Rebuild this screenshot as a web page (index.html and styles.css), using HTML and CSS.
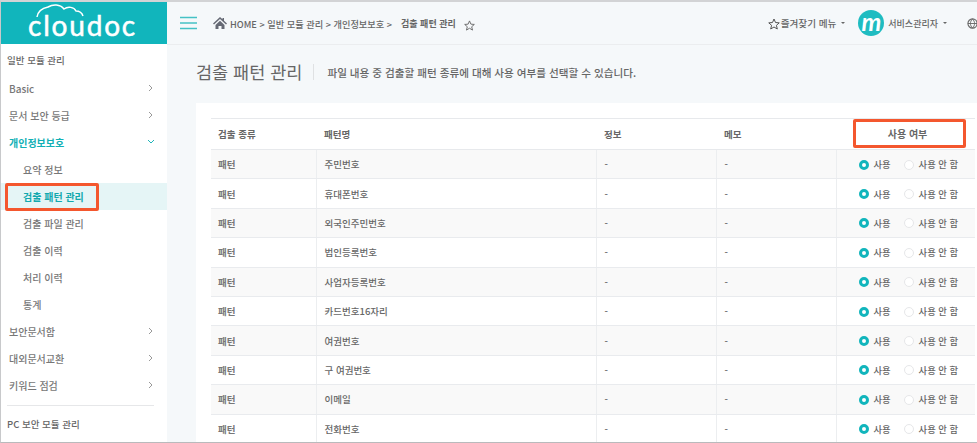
FILE: index.html
```html
<!DOCTYPE html>
<html lang="ko">
<head>
<meta charset="utf-8">
<title>검출 패턴 관리</title>
<link rel="stylesheet" href="styles.css">
</head>
<body>
<div class="app">
  <aside class="side">
    <div class="logo">
      <svg class="cloud" width="50" height="14" viewBox="0 0 50 14"><path d="M2 13C3 7 8 4 13 3C18 0 25 0 29 5C33 2 39 3 41 7C44 7 47 9 48 12" fill="none" stroke="#fff" stroke-width="1.5"/></svg>
      <span class="logo-text">cloudoc</span>
    </div>
    <nav class="menu">
      <div class="sect">일반 모듈 관리</div>
      <div class="item">Basic<svg class="chev" width="6" height="8" viewBox="0 0 6 8"><path d="M1 1l3 3-3 3" fill="none" stroke="#999" stroke-width="1"/></svg></div>
      <div class="item">문서 보안 등급<svg class="chev" width="6" height="8" viewBox="0 0 6 8"><path d="M1 1l3 3-3 3" fill="none" stroke="#999" stroke-width="1"/></svg></div>
      <div class="item open">개인정보보호<svg class="chev" width="8" height="6" viewBox="0 0 8 6"><path d="M1 1l3 3 3-3" fill="none" stroke="#1fb5ba" stroke-width="1"/></svg></div>
      <div class="sub">요약 정보</div>
      <div class="sub current">검출 패턴 관리<span class="redbox side-box"></span></div>
      <div class="sub">검출 파일 관리</div>
      <div class="sub">검출 이력</div>
      <div class="sub">처리 이력</div>
      <div class="sub">통계</div>
      <div class="item">보안문서함<svg class="chev" width="6" height="8" viewBox="0 0 6 8"><path d="M1 1l3 3-3 3" fill="none" stroke="#999" stroke-width="1"/></svg></div>
      <div class="item">대외문서교환<svg class="chev" width="6" height="8" viewBox="0 0 6 8"><path d="M1 1l3 3-3 3" fill="none" stroke="#999" stroke-width="1"/></svg></div>
      <div class="item">키워드 점검<svg class="chev" width="6" height="8" viewBox="0 0 6 8"><path d="M1 1l3 3-3 3" fill="none" stroke="#999" stroke-width="1"/></svg></div>
      <div class="rule"></div>
      <div class="sect last">PC 보안 모듈 관리</div>
    </nav>
  </aside>
  <main class="main">
    <header class="top">
      <svg class="burger" width="17" height="14" viewBox="0 0 17 14"><path d="M0 1.5h17M0 7h17M0 12.500h17" stroke="#45c1c5" stroke-width="1.500"/></svg>
      <svg class="home" width="14" height="12" viewBox="0 0 14 12"><path d="M7 0L0 6.500l1 1L7 2l6 5.500 1-1L11 3.700V1H9.500v1.300zM2.500 8L7 3.800 11.500 8v4H8.500V9h-3v3h-3z" fill="#666a75"/></svg>
      <div class="crumbs"><span>HOME &gt; 일반 모듈 관리 &gt; 개인정보보호 &gt;</span><b>검출 패턴 관리</b></div>
      <svg class="star" width="11" height="11" viewBox="0 0 24 24"><path d="M12 2l3 7 7.500.7-5.700 5 1.800 7.300L12 18l-6.600 4 1.800-7.300-5.700-5L9 9z" fill="none" stroke="#666" stroke-width="2"/></svg>
      <div class="tools">
        <svg class="star2" width="12" height="12" viewBox="0 0 24 24"><path d="M12 2l3 7 7.500.7-5.700 5 1.800 7.300L12 18l-6.600 4 1.800-7.300-5.700-5L9 9z" fill="none" stroke="#555" stroke-width="2"/></svg>
        <span class="fav">즐겨찾기 메뉴</span><i class="caret"></i>
        <span class="avatar">m</span>
        <span class="user">서비스관리자</span><i class="caret"></i>
        <svg class="globe" width="11" height="11" viewBox="0 0 12 12"><circle cx="6" cy="6" r="5" fill="none" stroke="#666" stroke-width="1.200"/><path d="M1 6h10M6 1c-3 3-3 7 0 10M6 1c3 3 3 7 0 10" fill="none" stroke="#666"/></svg>
      </div>
    </header>
    <div class="title-row">
      <h1>검출 패턴 관리</h1>
      <p>파일 내용 중 검출할 패턴 종류에 대해 사용 여부를 선택할 수 있습니다.</p>
    </div>
    <section class="card">
      <table class="grid">
        <colgroup><col class="c1"><col class="c2"><col class="c3"><col class="c4"><col class="c5"></colgroup>
        <thead>
          <tr><th>검출 종류</th><th>패턴명</th><th>정보</th><th>메모</th><th class="use">사용 여부<span class="redbox head-box"></span></th></tr>
        </thead>
        <tbody>
          <tr><td class="k">패턴</td><td>주민번호</td><td>-</td><td>-</td><td class="opt"><i class="on"></i><span class="l1">사용</span><i class="off"></i><span>사용 안 함</span></td></tr>
          <tr><td class="k">패턴</td><td>휴대폰번호</td><td>-</td><td>-</td><td class="opt"><i class="on"></i><span class="l1">사용</span><i class="off"></i><span>사용 안 함</span></td></tr>
          <tr><td class="k">패턴</td><td>외국인주민번호</td><td>-</td><td>-</td><td class="opt"><i class="on"></i><span class="l1">사용</span><i class="off"></i><span>사용 안 함</span></td></tr>
          <tr><td class="k">패턴</td><td>법인등록번호</td><td>-</td><td>-</td><td class="opt"><i class="on"></i><span class="l1">사용</span><i class="off"></i><span>사용 안 함</span></td></tr>
          <tr><td class="k">패턴</td><td>사업자등록번호</td><td>-</td><td>-</td><td class="opt"><i class="on"></i><span class="l1">사용</span><i class="off"></i><span>사용 안 함</span></td></tr>
          <tr><td class="k">패턴</td><td>카드번호16자리</td><td>-</td><td>-</td><td class="opt"><i class="on"></i><span class="l1">사용</span><i class="off"></i><span>사용 안 함</span></td></tr>
          <tr><td class="k">패턴</td><td>여권번호</td><td>-</td><td>-</td><td class="opt"><i class="on"></i><span class="l1">사용</span><i class="off"></i><span>사용 안 함</span></td></tr>
          <tr><td class="k">패턴</td><td>구 여권번호</td><td>-</td><td>-</td><td class="opt"><i class="on"></i><span class="l1">사용</span><i class="off"></i><span>사용 안 함</span></td></tr>
          <tr><td class="k">패턴</td><td>이메일</td><td>-</td><td>-</td><td class="opt"><i class="on"></i><span class="l1">사용</span><i class="off"></i><span>사용 안 함</span></td></tr>
          <tr><td class="k">패턴</td><td>전화번호</td><td>-</td><td>-</td><td class="opt"><i class="on"></i><span class="l1">사용</span><i class="off"></i><span>사용 안 함</span></td></tr>
        </tbody>
      </table>
    </section>
  </main>
</div>
</body>
</html>
```

FILE: styles.css
```css
* { box-sizing: border-box; }
html, body { margin: 0; padding: 0; height: 100%; overflow: hidden; background: #fff; }
body { font-family: "Noto Sans CJK KR", "Noto Sans", sans-serif; color: #666; }
.app {
  display: flex; width: 977px; height: 443px; overflow: hidden;
  border-top: 2px solid #d2d3d5; border-left: 1px solid #c8c9cb; border-bottom: 1px solid #b9babc;
}
.side { width: 166px; flex: none; background: #fff; display: flex; flex-direction: column; }
.logo { height: 42px; background: #11b5bc; position: relative; display: flex; justify-content: center; }
.logo-text { font-family: Lato, sans-serif; color: #fff; font-size: 28px; line-height: 42px; letter-spacing: 1.800px; padding-top: 2px; margin-left: -3px; -webkit-text-stroke: 0.5px #fff; }
.cloud { position: absolute; left: 34px; top: 2px; }
.menu { padding-top: 1px; display: flex; flex-direction: column; }
.sect { height: 30px; line-height: 30px; padding-left: 6px; font-size: 9.500px; color: #666; font-weight: 500; }
.sect.last { margin-top: 3px; }
.item, .sub { height: 27px; line-height: 27px; position: relative; color: #777; font-weight: 500; font-size: 10px; }
.item { padding-left: 8px; }
.sub { padding-left: 22px; }
.chev { position: absolute; right: 13px; top: 9px; }
.item.open { color: #11b0b5; font-weight: 700; }
.item.open .chev { top: 10px; right: 12px; }
.sub.current { background: #e5f5f6; color: #12a9ae; font-weight: 700; }
.rule { height: 1px; background: #e6e7e9; margin: 6px 13px 0 6px; }
.redbox { position: absolute; border: 3px solid #f4572e; border-radius: 2px; pointer-events: none; }
.side-box { left: 4px; top: 0; width: 94px; height: 28px; }
.main { flex: 1; min-width: 0; background: #f5f8fa; display: flex; flex-direction: column; }
.top { height: 43px; flex: none; display: flex; align-items: center; border-bottom: 1px solid #ebedef; padding-left: 13px; font-size: 9.200px; }
.burger { flex: none; margin-right: 16px; }
.home { flex: none; margin-right: 3px; }
.crumbs { display: flex; gap: 9px; color: #666; font-weight: 500; white-space: nowrap; margin-top: 1px; }
.crumbs b { font-weight: 700; font-size: 9px; }
.star { flex: none; margin-left: 8px; margin-top: 5px; }
.tools { margin-left: auto; display: flex; align-items: center; font-weight: 500; white-space: nowrap; }
.star2 { flex: none; margin-right: 1px; margin-top: 2px; }
.fav { font-size: 9.600px; }
.user { font-size: 9px; }
.caret { width: 0; height: 0; border: 2px solid transparent; border-top-color: #666; border-bottom: 0; margin-left: 5px; }
.avatar { width: 26px; height: 26px; border-radius: 50%; background: #1fbcc1; color: #fff; font: italic 700 25px/22px Lato, sans-serif; text-align: center; margin: 0 4px 0 13px; }
.globe { flex: none; margin: 0 -1px 0 20px; }
.title-row { height: 58px; flex: none; display: flex; align-items: center; padding-left: 29px; padding-bottom: 4px; }
.title-row h1 { margin: 0; font-size: 17.500px; font-weight: 400; color: #666; padding-right: 11px; border-right: 1px solid #dfe1e3; line-height: 16px; height: 16px; display: flex; align-items: center; }
.title-row p { margin: 0 0 0 13px; font-size: 10.600px; color: #666; font-weight: 500; }
.card { flex: 1; min-height: 0; background: #fff; margin: 0 0 0 29px; padding: 15px 2px 0 15px; }
.grid { width: 764px; border-collapse: collapse; table-layout: fixed; font-size: 9.500px; color: #666; }
.c1 { width: 105px; } .c2 { width: 280px; } .c3 { width: 120px; } .c4 { width: 120px; } .c5 { width: 139px; }
.grid th { height: 31px; padding: 0 0 1px 8px; text-align: left; font-weight: 700; border-top: 1px solid #e7e9ec; border-bottom: 1px solid #e7e9ec; position: relative; }
.grid th:first-child { padding-left: 7px; }
.grid th.use { text-align: center; font-size: 10px; padding: 0 0 1px 4px; }
.head-box { left: 17px; top: 0; width: 113px; height: 29px; }
.grid td { height: 29.400px; padding: 0 0 0 8px; border-bottom: 1px solid #e9ebee; border-left: 1px solid #eceef0; white-space: nowrap; font-weight: 500; }
.grid td:first-child { border-left: 0; padding-left: 7px; }
.grid td.k { font-weight: 700; color: #777; }
.grid tbody tr:nth-child(odd) td { background: #f9f9f9; }
.opt { font-size: 9.300px; padding-left: 22px !important; }
.opt i { display: inline-block; width: 10px; height: 10px; border-radius: 50%; vertical-align: -1.500px; margin-right: 5px; }
.opt .on { border: 3px solid #11b5bc; background: #fff; }
.opt .off { border: 1px solid #e6e7e9; background: #fff; }
.opt .l1 { margin-right: 13px; }
```
